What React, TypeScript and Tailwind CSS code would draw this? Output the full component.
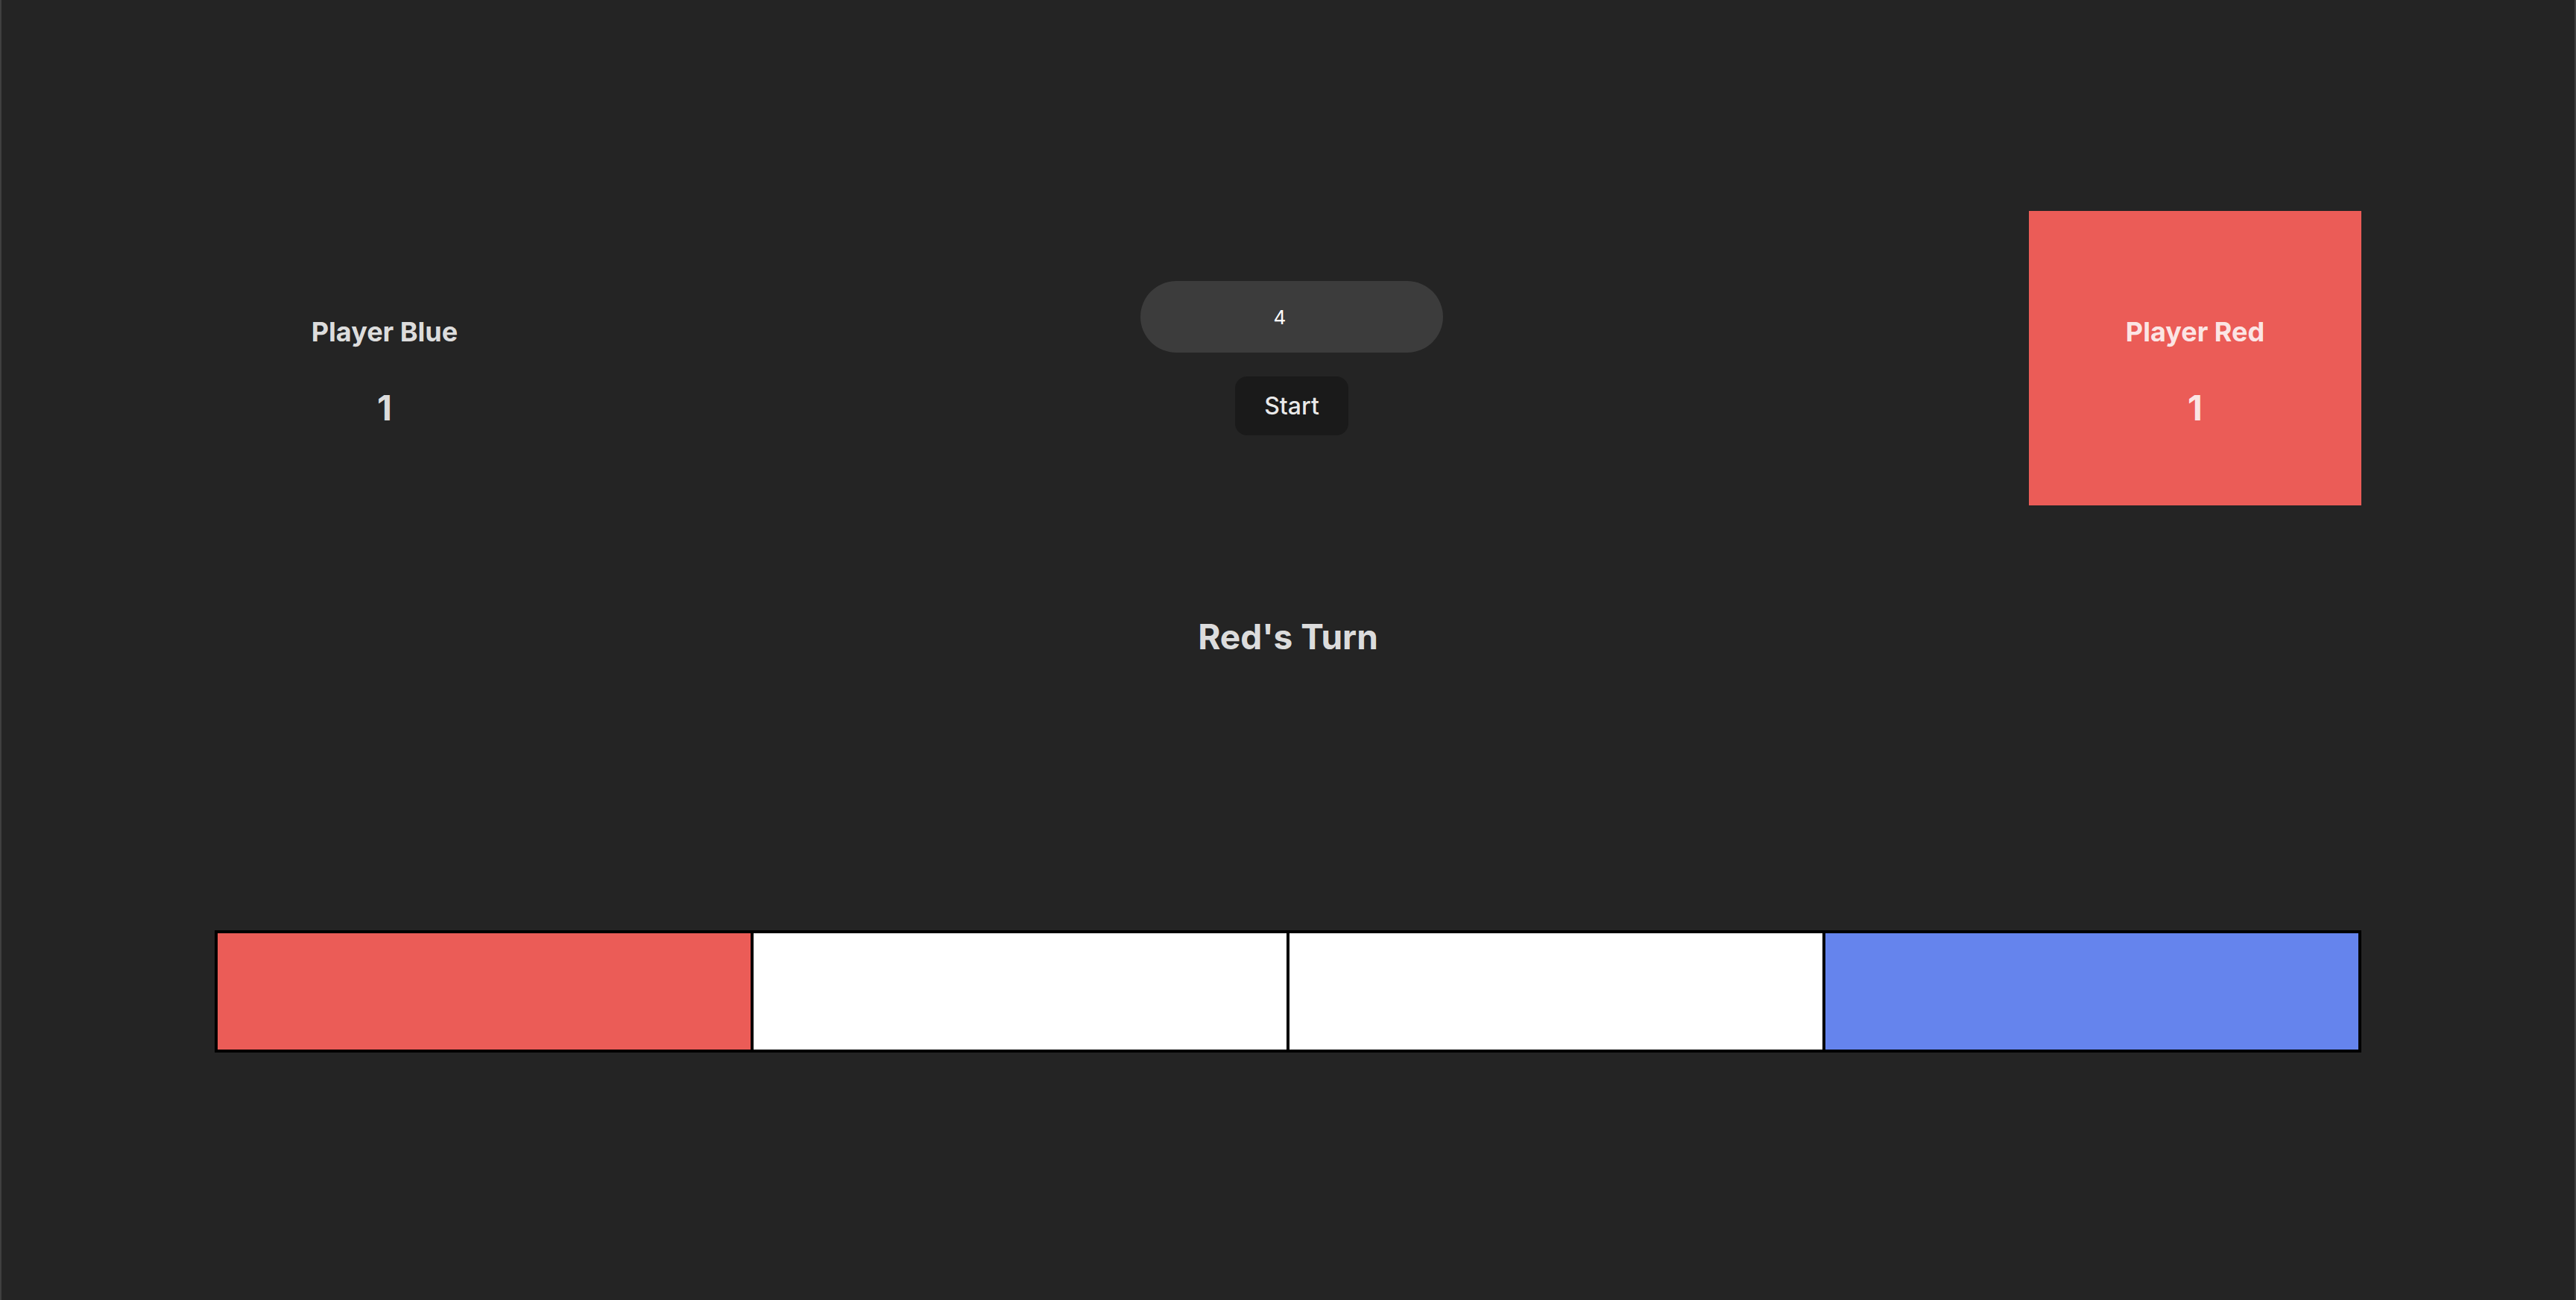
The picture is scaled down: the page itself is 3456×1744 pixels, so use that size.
import React from "react";

const font = { fontFamily: "Inter, 'Noto Sans', 'Liberation Sans', sans-serif" };

function Panel({ name, score, active }: { name: string; score: number; active?: boolean }) {
  return (
    <div
      className={`flex h-[395px] w-[446px] flex-col items-center pt-[144px] text-[rgba(255,255,255,0.87)] ${
        active ? "bg-[#eb5c57]" : "pl-[10px]"
      }`}
    >
      <div className="text-[36px] font-bold leading-[36px]">{name}</div>
      <div className="mt-[61px] text-[46px] font-bold leading-[46px]">{score}</div>
    </div>
  );
}

export default function App() {
  const cells = ["bg-[#eb5c57]", "bg-white", "bg-white", "bg-[#6584ed]"];
  return (
    <div
      className="h-[1744px] w-full border-x-2 border-[#3f3f3f] bg-[#242424] text-[rgba(255,255,255,0.87)]"
      style={font}
    >
      <div className="mx-auto flex w-[2880px] flex-col pt-[283px]">
        <div className="flex items-center justify-between">
          <Panel name="Player Blue" score={1} />
          <div className="flex flex-col items-center gap-[32px] pl-[10px]">
            <input
              readOnly
              value="4"
              className="h-[96px] w-[406px] rounded-full bg-[#3c3c3c] pr-[32px] text-center text-[26px] text-white outline-none"
              style={font}
            />
            <button
              className="h-[79px] w-[152px] rounded-[16px] border-2 border-transparent bg-[#1a1a1a] text-[32px] font-medium text-[rgba(255,255,255,0.92)]"
              style={font}
            >
              Start
            </button>
          </div>
          <Panel name="Player Red" score={1} active />
        </div>
        <div className="mt-[153px] text-center text-[46px] font-bold leading-[46px]">Red's Turn</div>
        <div className="mt-[371px] flex gap-[4px] bg-black p-[4px]">
          {cells.map((c, i) => (
            <div key={i} className={`h-[156px] flex-1 ${c}`} />
          ))}
        </div>
      </div>
    </div>
  );
}
